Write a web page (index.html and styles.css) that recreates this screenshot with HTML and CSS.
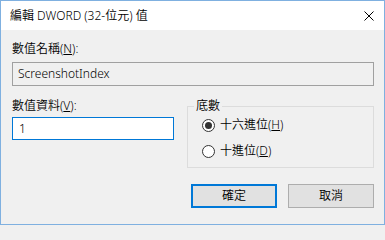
FILE: index.html
```html
<!DOCTYPE html>
<html lang="zh-Hant">
<head>
<meta charset="utf-8">
<title>編輯 DWORD (32-位元) 值</title>
<link rel="stylesheet" href="styles.css">
</head>
<body>
<div class="window">
  <div class="titlebar">
    <span class="title">編輯 DWORD (32-位元) 值</span>
    <span class="close">
      <svg width="10" height="10" viewBox="0 0 10 10"><path d="M0.5 0.5 L9.5 9.5 M9.5 0.5 L0.5 9.5" stroke="#000" stroke-width="1" fill="none"/></svg>
    </span>
  </div>
  <div class="content">
    <div class="label">數值名稱(<u>N</u>):</div>
    <div class="textbox readonly">ScreenshotIndex</div>
    <div class="row">
      <div class="col-left">
        <div class="label">數值資料(<u>V</u>):</div>
        <div class="textbox active">1</div>
      </div>
      <fieldset class="group">
        <legend>底數</legend>
        <div class="radio"><span class="dot checked"></span><span>十六進位(<u>H</u>)</span></div>
        <div class="radio"><span class="dot"></span><span>十進位(<u>D</u>)</span></div>
      </fieldset>
    </div>
    <div class="buttons">
      <div class="btn default">確定</div>
      <div class="btn">取消</div>
    </div>
  </div>
</div>
</body>
</html>
```
FILE: styles.css
```css
html, body {
  margin: 0;
  padding: 0;
  background: #f0f0f0;
}
body {
  font-family: "Noto Sans", "Noto Sans CJK TC", sans-serif;
  font-size: 12px;
  font-weight: 350;
  line-height: 16px;
  color: #000;
}
.window {
  width: 385px;
  height: 225px;
  box-sizing: border-box;
  border: 1px solid #7fb0e0;
  background: #f0f0f0;
  display: flex;
  flex-direction: column;
}
.titlebar {
  height: 29px;
  background: #fff;
  display: flex;
  align-items: center;
  justify-content: space-between;
  padding: 0 10px 0 9px;
}
.title {
  font-size: 12px;
}
.close {
  display: flex;
  margin-top: 1px;
}
.content {
  padding: 11px 10px 0 11px;
  display: flex;
  flex-direction: column;
}
.label {
  height: 16px;
}
u {
  text-decoration: underline;
  text-underline-offset: 1px;
}
.textbox {
  box-sizing: border-box;
  height: 24px;
  padding: 0 5px;
  display: flex;
  align-items: center;
}
.textbox.readonly {
  margin-top: 5px;
  border: 1px solid #a0a0a0;
  background: #f0f0f0;
}
.textbox.active {
  margin-top: 3px;
  height: 23px;
  border: 1px solid #0078d7;
  background: #fff;
  padding-left: 6px;
}
.row {
  display: flex;
  margin-top: 12px;
  gap: 13px;
}
.col-left {
  width: 162px;
  display: flex;
  flex-direction: column;
}
.group {
  flex: 1;
  margin: 0;
  height: 70px;
  box-sizing: border-box;
  border: 1px solid #dcdcdc;
  padding: 3px 0 0 0;
  display: flex;
  flex-direction: column;
  gap: 10px;
}
.group legend {
  padding: 0 2px;
  margin-left: 6px;
  line-height: 16px;
}
.radio {
  display: flex;
  align-items: center;
  gap: 5px;
  height: 16px;
  margin-left: 14px;
}
.dot {
  width: 11px;
  height: 11px;
  border: 1px solid #333;
  border-radius: 50%;
  background: #fff;
  display: flex;
  align-items: center;
  justify-content: center;
}
.dot.checked::after {
  content: "";
  width: 7px;
  height: 7px;
  border-radius: 50%;
  background: #333;
}
.buttons {
  display: flex;
  justify-content: flex-end;
  gap: 11px;
  margin-top: 16px;
}
.btn {
  box-sizing: border-box;
  width: 86px;
  height: 24px;
  background: #e1e1e1;
  border: 1px solid #adadad;
  display: flex;
  align-items: center;
  justify-content: center;
}
.btn.default {
  border: 2px solid #0078d7;
}
```
